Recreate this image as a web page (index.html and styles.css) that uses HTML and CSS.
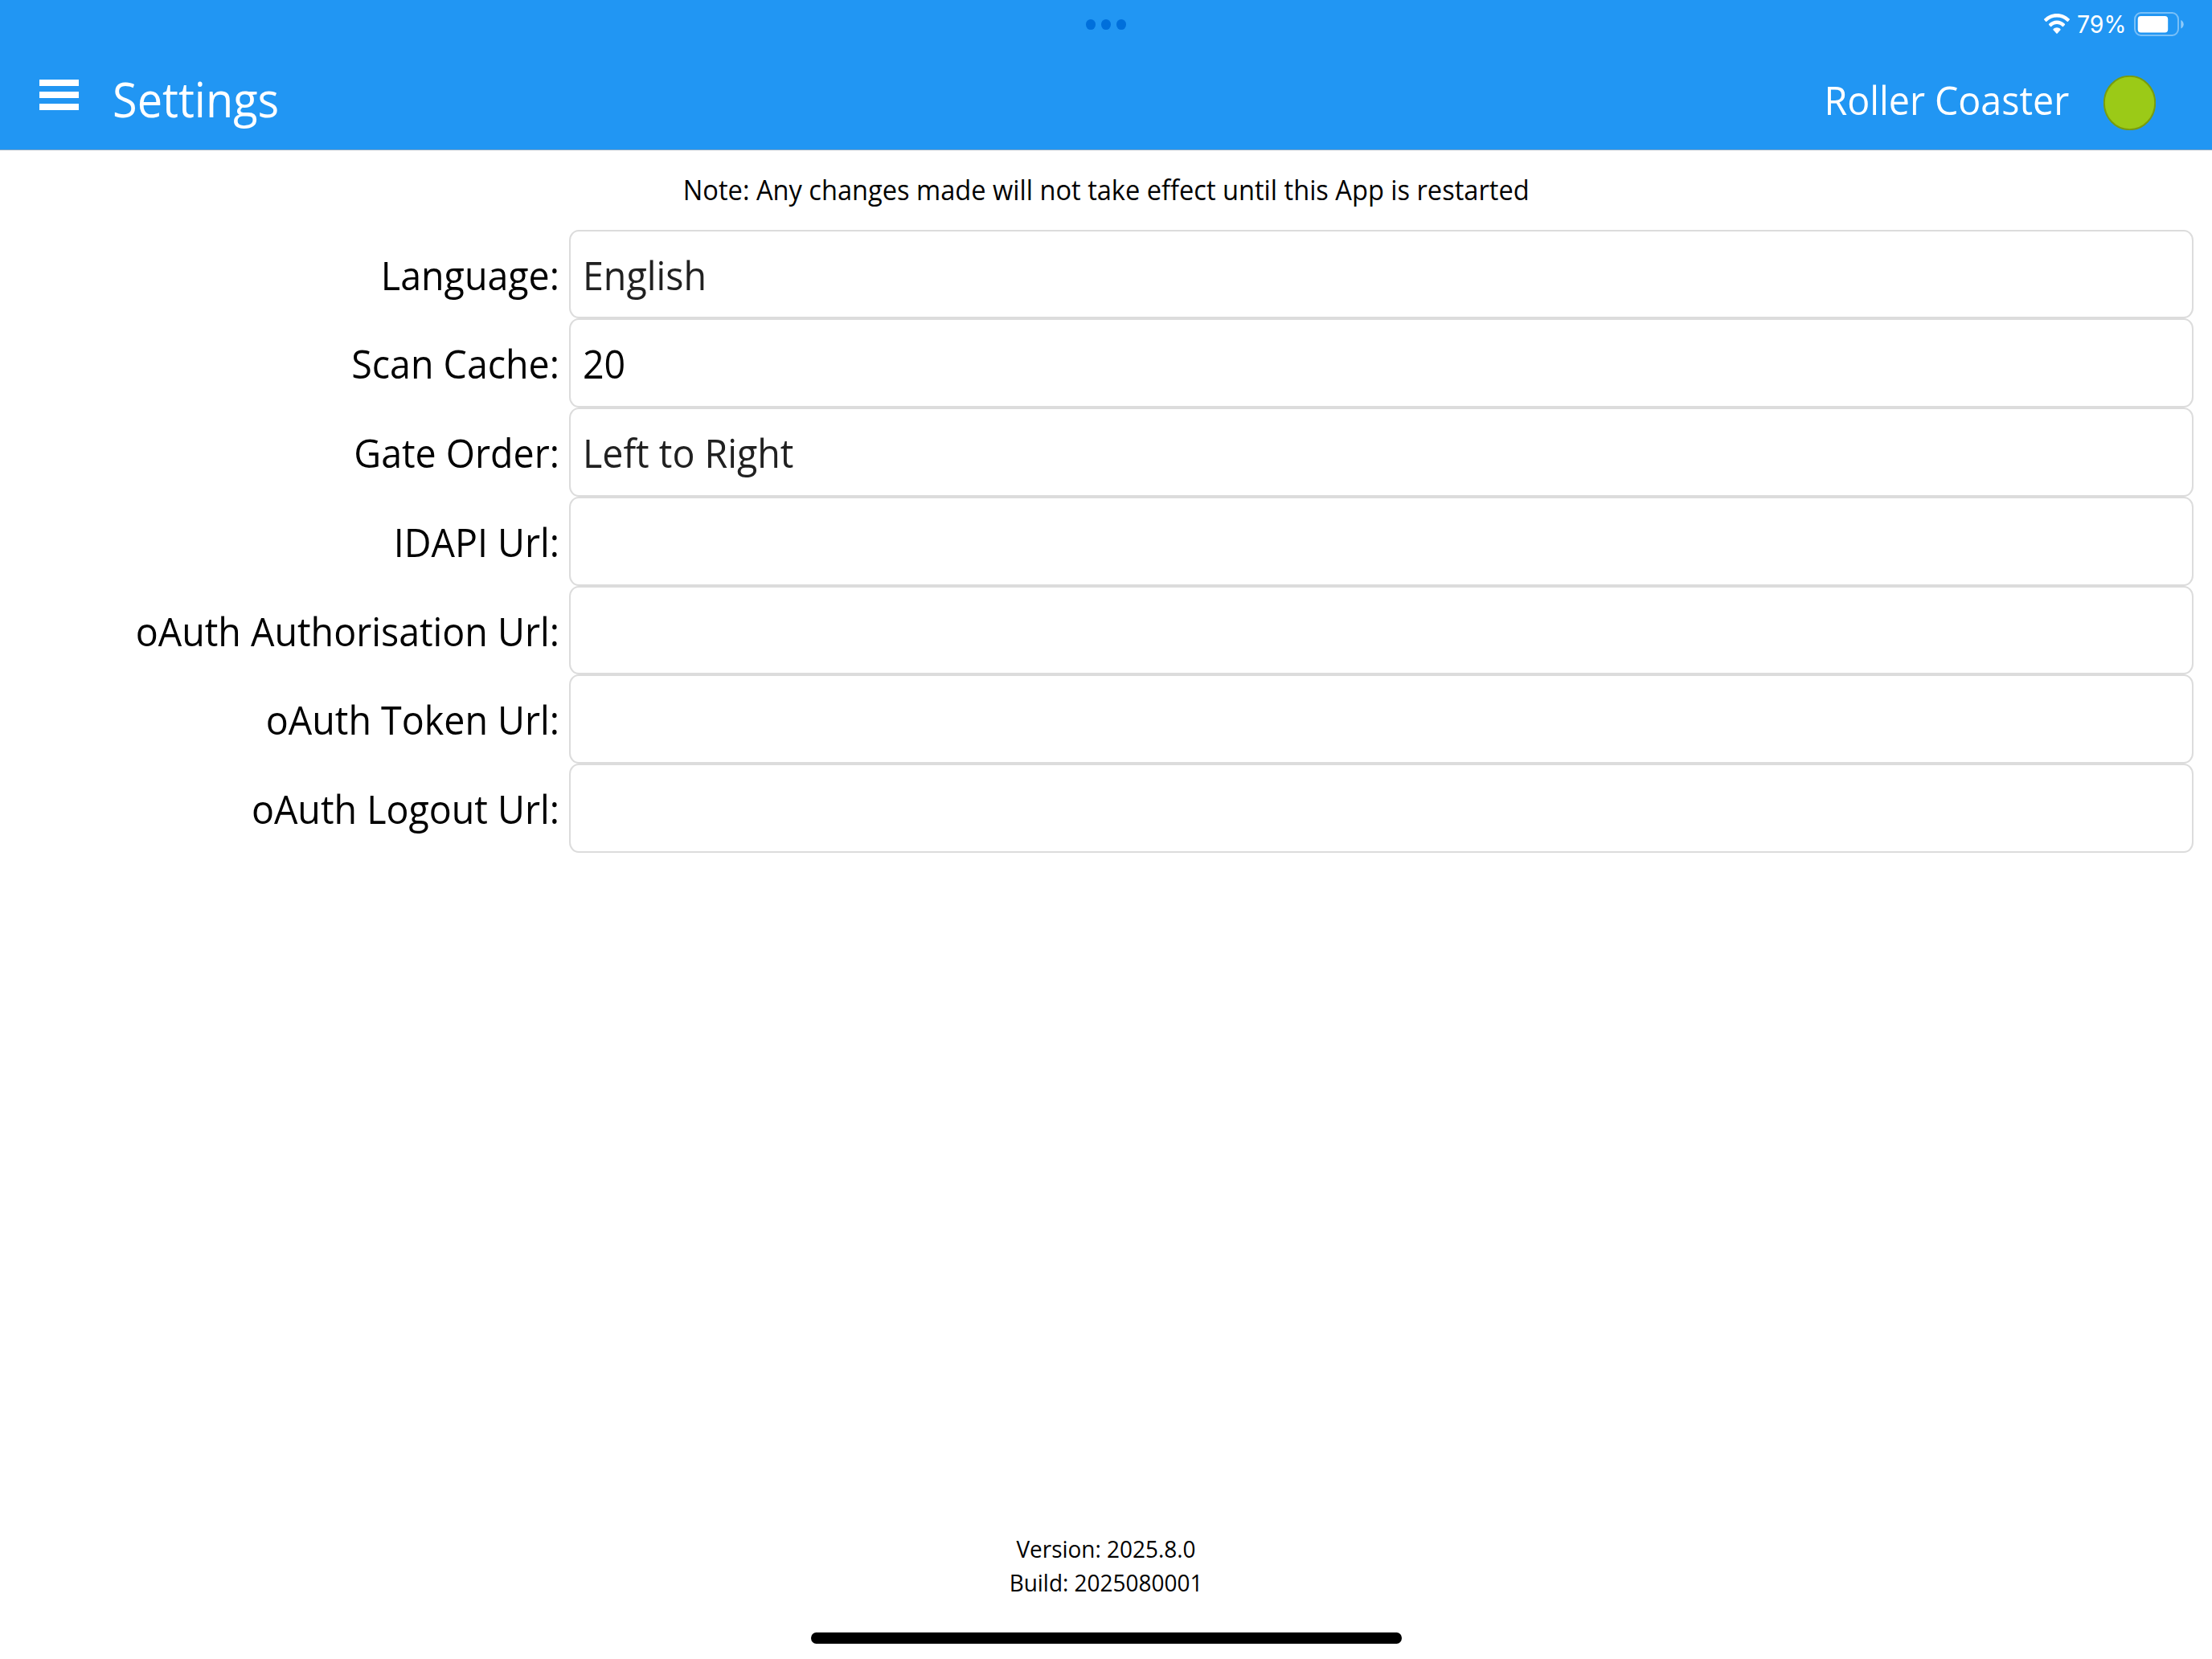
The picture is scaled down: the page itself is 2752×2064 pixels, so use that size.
FILE: index.html
```html
<!DOCTYPE html>
<html lang="en">
<head>
    <meta charset="UTF-8">
    <meta name="viewport" content="width=device-width, initial-scale=1.0">
    <title>Settings</title>
    <link rel="stylesheet" href="styles.css">
</head>
<body>
    <header class="header">
        <div class="status-bar">
            <div></div>
            <div class="dots">
                <span></span>
                <span></span>
                <span></span>
            </div>
            <div class="status-icons">
                <svg class="wifi" viewBox="0 0 32 26">
                    <path d="M16 0C9.9 0 4.300 2.500 0.300 6.600Q-0.200 7.200 0.300 7.800L2.100 9.700Q2.700 10.200 3.300 9.700C6.700 6.400 11.100 4.500 16 4.500S25.300 6.400 28.700 9.700Q29.300 10.200 29.900 9.700L31.700 7.800Q32.200 7.200 31.700 6.600C27.700 2.500 22.100 0 16 0Z"/>
                    <path d="M16 8.600C12.200 8.600 8.700 10.200 6.100 12.800Q5.600 13.400 6.100 14L8 16Q8.600 16.500 9.200 16C11 14.200 13.400 13.100 16 13.100S21 14.200 22.800 16Q23.400 16.500 24 16L25.900 14Q26.400 13.400 25.900 12.800C23.300 10.200 19.800 8.600 16 8.600Z"/>
                    <path d="M16 17.300C14.300 17.300 12.800 18 11.600 19.100Q11.100 19.700 11.600 20.300L15.300 24.600Q16 25.400 16.700 24.600L20.400 20.300Q20.900 19.700 20.400 19.100C19.200 18 17.700 17.300 16 17.300Z"/>
                </svg>
                <span class="battery-text">79%</span>
                <svg class="battery" viewBox="0 0 64 30">
                    <rect class="battery-outline" x="1" y="1" width="54" height="28" rx="7.500" ry="8"/>
                    <rect x="4.700" y="5" width="37.500" height="20.600" rx="3.800" ry="4"/>
                    <path class="battery-cap" d="M58.300 10C60.200 10.800 61.700 12.800 61.700 15.300S60.200 19.800 58.300 20.600Z"/>
                </svg>
            </div>
        </div>
        <div class="nav-bar">
            <div class="menu-button">
                <span></span>
                <span></span>
                <span></span>
            </div>
            <h1 class="title">Settings</h1>
            <div class="ride-name">Roller Coaster</div>
            <svg class="status-light" viewBox="0 0 65 68">
                <ellipse cx="32.500" cy="34" rx="31.700" ry="33.200"/>
            </svg>
        </div>
    </header>

    <main class="content">
        <p class="note"><span>Note: Any changes made will not take effect until this App is restarted</span></p>
        <div class="form">
            <div class="row">
                <div class="label">Language:</div>
                <div class="field"><span class="picker">English</span></div>
            </div>
            <div class="row">
                <div class="label">Scan Cache:</div>
                <div class="field"><span>20</span></div>
            </div>
            <div class="row">
                <div class="label">Gate Order:</div>
                <div class="field"><span class="picker">Left to Right</span></div>
            </div>
            <div class="row">
                <div class="label">IDAPI Url:</div>
                <div class="field"></div>
            </div>
            <div class="row">
                <div class="label">oAuth Authorisation Url:</div>
                <div class="field"></div>
            </div>
            <div class="row">
                <div class="label">oAuth Token Url:</div>
                <div class="field"></div>
            </div>
            <div class="row">
                <div class="label">oAuth Logout Url:</div>
                <div class="field"></div>
            </div>
        </div>
    </main>

    <footer class="footer">
        <p>Version: 2025.8.0</p>
        <p>Build: 2025080001</p>
        <div class="home-indicator"></div>
    </footer>
</body>
</html>
```

FILE: styles.css
```css
* {
    box-sizing: border-box;
}
body {
    margin: 0;
    height: 2064px;
    display: flex;
    flex-direction: column;
    background-color: #fff;
    color: #000;
    font-family: 'Open Sans', sans-serif;
    font-size: 50px;
    overflow: hidden;
}
h1, p {
    margin: 0;
    font-weight: normal;
}
.header {
    height: 187px;
    flex-shrink: 0;
    background-color: #2196f3;
    border-bottom: 1px solid #8fa9c0;
    color: #fff;
}
.status-bar {
    height: 60px;
    display: grid;
    grid-template-columns: 1fr auto 1fr;
    align-items: center;
    padding-right: 33px;
}
.dots {
    display: flex;
    gap: 6.5px;
    margin-left: 33px;
}
.dots span {
    width: 12.2px;
    height: 13px;
    border-radius: 50%;
    background-color: #006fdb;
}
.status-icons {
    display: flex;
    justify-content: flex-end;
    align-items: center;
}
.status-icons svg {
    fill: #fff;
}
.wifi {
    width: 32px;
    height: 26px;
}
.battery-text {
    width: 60px;
    margin: 0 11px 0 9px;
    font-family: Inter, sans-serif;
    font-size: 29.7px;
    line-height: 60px;
    white-space: nowrap;
    transform: scaleX(0.96);
    transform-origin: left;
}
.battery {
    width: 64px;
    height: 30px;
}
.status-icons .battery-outline {
    fill: none;
    stroke: #fff;
    stroke-opacity: 0.4;
    stroke-width: 2;
}
.battery-cap {
    fill-opacity: 0.5;
}
.nav-bar {
    height: 126px;
    display: flex;
    align-items: flex-start;
    padding-left: 49px;
    padding-right: 70px;
}
.menu-button {
    width: 49px;
    margin-top: 39px;
    display: flex;
    flex-direction: column;
    gap: 7px;
}
.menu-button span {
    height: 8px;
    background-color: #fff;
}
.title {
    flex: 1;
    margin-left: 42px;
    font-size: 60px;
    line-height: 127px;
    transform: scaleX(0.9313);
    transform-origin: left;
}
.ride-name {
    line-height: 128px;
    transform: scaleX(0.9313);
    transform-origin: right;
}
.status-light {
    width: 65px;
    height: 68px;
    margin-top: 34px;
    margin-left: 43px;
    fill: #9bca17;
    stroke: #779c10;
    stroke-width: 2;
}
.note {
    height: 98.5px;
    font-size: 35px;
    line-height: 98px;
    text-align: center;
}
.note span {
    display: inline-block;
    transform: scaleX(0.9313);
}
.row {
    height: 110.75px;
    display: flex;
}
.label {
    width: 708px;
    padding-right: 12px;
    line-height: 112px;
    text-align: right;
    white-space: nowrap;
    transform: scaleX(0.9313);
    transform-origin: 696px 50%;
}
.field {
    width: 2021px;
    padding-left: 15px;
    border: 2px solid #dcdcdc;
    border-radius: 12px / 13px;
    line-height: 109px;
}
.field span {
    display: inline-block;
    transform: scaleX(0.9313);
    transform-origin: left;
}
.picker {
    color: #212121;
}
.footer {
    margin-top: auto;
    font-size: 30px;
    line-height: 41.5px;
    text-align: center;
}
.footer p {
    transform: scaleX(0.9313);
}
.home-indicator {
    width: 735px;
    height: 14px;
    margin: 42px auto 19px;
    border-radius: 6.5px / 7px;
    background-color: #000;
}
```
